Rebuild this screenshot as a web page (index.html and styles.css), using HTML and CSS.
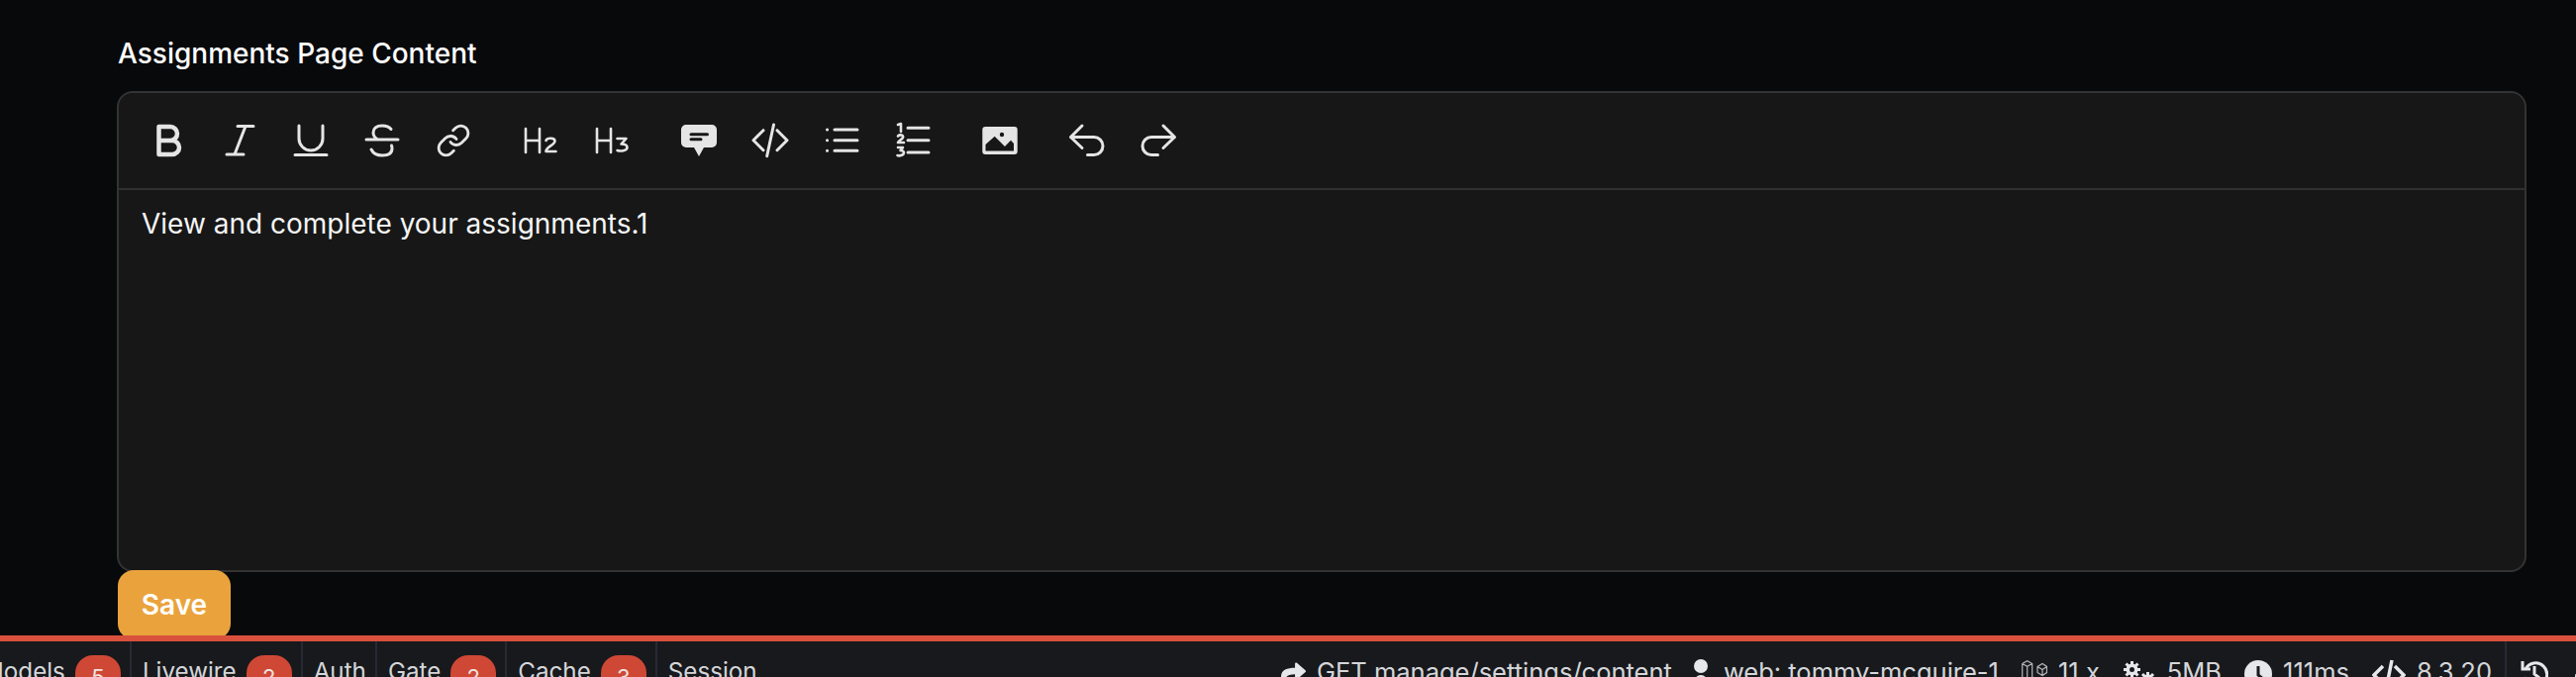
FILE: index.html
```html
<!DOCTYPE html>
<html lang="en">

<head>
  <meta charset="UTF-8">
  <title>Settings content</title>
  <link rel="stylesheet" href="styles.css">
</head>

<body>
  <main class="content">
    <label class="field__label">Assignments Page Content</label>
    <div class="editor">
      <div class="editor__toolbar">
        <div class="editor__group">
          <button><svg viewBox="0 0 40 40"><path class="bold" d="M10.500 6H22a7 7 0 0 1 0 14H10.500zM10.500 20H24a7 7 0 0 1 0 14H10.500z"/></svg></button>
          <button><svg viewBox="0 0 40 40"><path d="M18 5.500h16M7 34h17M26 5.500L15 34"/></svg></button>
          <button><svg viewBox="0 0 40 40"><path d="M8 5v13a12 12 0 0 0 24 0V5M4 34.500h32"/></svg></button>
          <button><svg viewBox="0 0 40 40"><path d="M4 19h32M29 8.500C27 6 24 5 20 5c-6 0-9 3-9 7 0 3 1.500 5 4 6.500M9 29c2 4 6 6 11 6 7 0 10-3 10-7 0-1-.2-2-.5-3"/></svg></button>
          <button><svg viewBox="0 0 40 40"><g class="link" transform="translate(2 2) scale(1.5)"><path d="M10 13a5 5 0 0 0 7.540.54l3-3a5 5 0 0 0-7.070-7.070l-1.720 1.710"/><path d="M14 11a5 5 0 0 0-7.540-.54l-3 3a5 5 0 0 0 7.070 7.070l1.710-1.710"/></g></svg></button>
        </div>
        <div class="editor__group">
          <button><svg class="heading" viewBox="0 0 40 40"><path d="M5 8v24M19 8v24M5 20h14M25.500 20c1-3 9-3 9 .5 0 4-9 6-9 10.500h10"/></svg></button>
          <button><svg class="heading" viewBox="0 0 40 40"><path d="M5 8v24M19 8v24M5 20h14M25.500 18h9l-5 5.500c3 0 6 1 6 3.500 0 3.500-7 4-10 3"/></svg></button>
        </div>
        <div class="editor__group">
          <button><svg viewBox="0 0 40 40"><path class="solid" d="M7 4h26a5 5 0 0 1 5 5v13a5 5 0 0 1-5 5h-8l-5 9-5-9H7a5 5 0 0 1-5-5V9a5 5 0 0 1 5-5z"/><path class="cut" d="M12 13.700h16.500M12 18.700h10"/></svg></button>
          <button><svg viewBox="0 0 40 40"><path d="M13 9.700L3 19.700l10 10M27 9.700l10 10-10 10M23.500 4l-6.800 31.700"/></svg></button>
          <button><svg viewBox="0 0 40 40"><path d="M13 9h23M13 19.700h23M13 30.300h23M5.500 9h.1M5.500 19.700h.1M5.500 30.300h.1"/></svg></button>
          <button><svg viewBox="0 0 40 40"><path d="M15 7.300h21M15 19.700h21M15 32h21"/><path class="numerals" d="M5 4l3-1v8M5 15.500c2-2 6-1 5 1.500-.5 1.500-4 3-5 5h6M5 27h5l-2.500 3c2 0 3.500.7 3.500 2.500S7 36 4.500 35"/></svg></button>
        </div>
        <div class="editor__group">
          <button><svg viewBox="0 0 40 40"><rect class="solid" x="2.300" y="6" width="35.400" height="28" rx="3"/><path class="cut-solid" d="M5.500 30.500V24l9.200-8.300L25 26l6-6.300 3 3.300v7.500z"/><circle class="cut-solid" cx="22" cy="14" r="2.200"/></svg></button>
        </div>
        <div class="editor__group">
          <button><svg viewBox="0 0 40 40"><path d="M15 5L3.500 16.500 15 27.500M3.500 16.500H27a9 9 0 0 1 0 18h-6.500"/></svg></button>
          <button><svg viewBox="0 0 40 40"><path d="M25 5l11.500 11.500L25 27.500M36.500 16.500H13a9 9 0 0 0 0 18h6.500"/></svg></button>
        </div>
      </div>
      <div class="editor__body">
        <p>View and complete your assignments.1</p>
      </div>
    </div>
    <button class="btn-save">Save</button>
  </main>

  <footer class="debugbar">
    <div class="debugbar__tabs">
      <a class="tab">Models <span class="badge">5</span></a>
      <a class="tab">Livewire <span class="badge">2</span></a>
      <a class="tab">Auth</a>
      <a class="tab">Gate <span class="badge">2</span></a>
      <a class="tab">Cache <span class="badge">3</span></a>
      <a class="tab">Session</a>
    </div>
    <div class="debugbar__meta">
      <span class="meta"><svg class="meta__icon meta__icon--share" viewBox="0 0 512 512"><path d="M503.700 189.800L327.700 37.900C312.300 24.500 288 35.300 288 56v80.100C127.400 137.900 0 170.100 0 322.300c0 61.400 39.600 122.300 83.300 154.100 13.700 9.900 33.100-2.500 28.100-18.600C66.100 312.800 132.900 274.300 288 272.100V360c0 20.700 24.300 31.500 39.700 18.200l176-152c11.100-9.600 11.100-26.800 0-36.400z"/></svg>GET manage/settings/content</span>
      <span class="meta meta--user"><svg class="meta__icon meta__icon--user" viewBox="0 0 16 36"><circle cx="8" cy="7" r="7"/><path d="M0 30c0-9 3-14 8-14s8 5 8 14z"/></svg>web: tommy-mcguire-1</span>
      <span class="meta"><svg class="meta__icon meta__icon--laravel" viewBox="0 0 26 36"><path d="M.7 3.500L5.700.7l5 2.800v19l5 3M.7 3.500l5 2.800 5-2.800M5.700 6.300v20M.7 3.500v19l5 3.800 5.500 3M10.700 22.500l5.300-3M16 6.500l5-3 4.500 3v6l-4.500 3-5-3zM16 6.500l5 3 4.500-3M21 9.500v6"/></svg>11 x</span>
      <span class="meta"><svg class="meta__icon meta__icon--gears" viewBox="0 0 34 36"><path class="gear-teeth" d="M9.500 1v17M1 9.500h17M3.500 3.500l12 12M15.500 3.500l-12 12"/><circle cx="9.500" cy="9.500" r="6"/><circle class="gear-hole" cx="9.500" cy="9.500" r="2.500"/><path class="gear-teeth" d="M25.500 12v15M18 19.500h15M20 14l11 11M31 14L20 25"/><circle cx="25.500" cy="19.500" r="5"/><circle class="gear-hole" cx="25.500" cy="19.500" r="2"/></svg>5MB</span>
      <span class="meta"><svg class="meta__icon meta__icon--clock" viewBox="0 0 28 36"><circle cx="14" cy="14" r="14"/><path class="clock-hands" d="M14 6v9l5 4"/></svg>111ms</span>
      <span class="meta"><svg class="meta__icon meta__icon--code" viewBox="0 0 34 36"><path d="M11 9l-9 9 9 9M23 9l9 9-9 9M20 3l-6 30"/></svg>8.3.20</span>
    </div>
    <div class="debugbar__actions">
      <svg class="action-icon" viewBox="0 0 28 36"><path d="M5 11a11.500 11.500 0 1 1-1 8M2 3v8h8M14 8v8l5 4"/></svg>
      <span class="action-next"></span>
    </div>
  </footer>
</body>

</html>
```

FILE: styles.css
```css
html,
body {
  height: 100%;
}

body {
  margin: 0;
  height: 684px;
  overflow: hidden;
  background-color: #08090b;
  color: #fff;
  font-family: Inter, "Liberation Sans", sans-serif;
}

.content {
  display: flex;
  flex-direction: column;
  align-items: flex-start;
  height: 642px;
  box-sizing: border-box;
  padding: 36px 50px 0 118px;
  overflow: hidden;
}

.field__label {
  display: block;
  margin-left: 1px;
  font-size: 28px;
  line-height: 36px;
  font-weight: 500;
}

.editor {
  width: 100%;
  height: 486px;
  flex-shrink: 0;
  box-sizing: border-box;
  margin-top: 20px;
  background-color: #171717;
  border: 2px solid #333;
  border-radius: 16px;
}

.editor__toolbar {
  display: flex;
  gap: 16px;
  height: 98px;
  box-sizing: border-box;
  padding-left: 14px;
  border-bottom: 2px solid #303030;
}

.editor__group {
  display: flex;
  align-items: center;
}

.editor__group button {
  display: flex;
  align-items: center;
  justify-content: center;
  width: 72px;
  height: 40px;
  padding: 0;
  border: none;
  background: none;
}

.editor__group svg {
  width: 40px;
  height: 40px;
  fill: none;
  stroke: #e5e5e5;
  stroke-width: 3;
  stroke-linecap: round;
  stroke-linejoin: round;
}

.editor__group .bold {
  stroke-width: 4.500;
}

.editor__group .link {
  stroke-width: 1.900;
}

.editor__group .heading {
  stroke-width: 2.600;
}

.editor__group .numerals {
  stroke-width: 2.600;
}

.editor__group .solid {
  fill: #e5e5e5;
  stroke: none;
}

.editor__group .cut {
  stroke: #171717;
}

.editor__group .cut-solid {
  fill: #171717;
  stroke: none;
}

.editor__body {
  padding: 14px 23px;
}

.editor__body p {
  margin: 0;
  font-size: 28px;
  line-height: 40px;
  color: #f5f5f5;
}

.btn-save {
  flex-shrink: 0;
  width: 114px;
  height: 70px;
  margin: -2px 0 0 1px;
  padding: 0;
  border: none;
  border-radius: 16px;
  background-color: #eaa33c;
  color: #fff;
  font-family: inherit;
  font-size: 28px;
  font-weight: 600;
}

.debugbar {
  display: flex;
  height: 42px;
  box-sizing: border-box;
  border-top: 6px solid #d9503c;
  background-color: #18191c;
  color: #d4d6da;
  font-size: 24.200px;
  overflow: hidden;
}

.debugbar__tabs {
  display: flex;
  flex-shrink: 0;
  margin-left: -29px;
}

.tab {
  display: flex;
  gap: 10px;
  align-items: flex-start;
  height: 60px;
  padding: 16px 9px 0 11px;
  border-right: 2px solid #262a35;
  white-space: nowrap;
}

.tab:last-child {
  border-right: none;
}

.badge {
  width: 46px;
  height: 40px;
  margin-top: -2px;
  border-radius: 18px;
  background-color: #cf4835;
  color: #f0e4e1;
  font-size: 22px;
  text-align: center;
  line-height: 44px;
}

.debugbar__meta {
  display: flex;
  flex-grow: 1;
  justify-content: flex-end;
  gap: 23px;
  padding: 15px 13px 0 0;
  font-size: 25.500px;
  white-space: nowrap;
}

.meta {
  display: flex;
  gap: 11px;
  align-items: flex-start;
}

.meta--user {
  gap: 15px;
  margin-left: -2px;
}

.meta__icon {
  flex-shrink: 0;
  margin-top: 4px;
  fill: #e5e7eb;
}

.meta__icon--share {
  width: 25px;
  height: 25px;
  margin-top: 5px;
}

.meta__icon--user {
  width: 16px;
  height: 36px;
  margin-top: 3px;
}

.meta__icon--laravel {
  width: 26px;
  height: 36px;
  fill: none;
  stroke: #b4b6bc;
  stroke-width: 1.200;
}

.meta__icon--gears {
  width: 34px;
  height: 36px;
}

.gear-teeth {
  fill: none;
  stroke: #e5e7eb;
  stroke-width: 3;
}

.gear-hole {
  fill: #18191c;
}

.meta__icon--clock {
  width: 28px;
  height: 36px;
}

.clock-hands {
  fill: none;
  stroke: #18191c;
  stroke-width: 3;
}

.meta__icon--code {
  width: 34px;
  height: 36px;
  margin-top: 1px;
  fill: none;
  stroke: #e5e7eb;
  stroke-width: 3.500;
}

.debugbar__actions {
  display: flex;
  flex-shrink: 0;
  gap: 27px;
  width: 72px;
  box-sizing: border-box;
  padding: 18px 0 0 14px;
  border-left: 2px solid #262a35;
}

.action-icon {
  flex-shrink: 0;
  width: 28px;
  height: 36px;
  margin-top: -1px;
  fill: none;
  stroke: #e5e7eb;
  stroke-width: 3;
}

.action-next {
  flex-shrink: 0;
  width: 6px;
  height: 10px;
  margin-top: 14px;
  border-radius: 3px;
  background-color: #e5e7eb;
}
```
